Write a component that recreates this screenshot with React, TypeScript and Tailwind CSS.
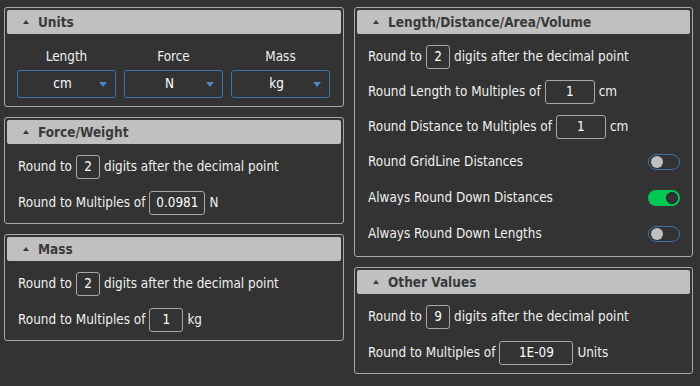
import React from 'react';

const font = { fontFamily: '"DejaVu Sans Condensed", "DejaVu Sans", Tahoma, sans-serif' };

function Panel({ title, children }: { title: string; children: React.ReactNode }) {
  return (
    <div className="rounded-[3px] border border-[#a8a8a8] p-[2px]">
      <div className="flex h-[24px] items-center rounded-[2px] bg-[#c0c0c0] pl-[16px]">
        <span className="mr-[9px] h-0 w-0 border-x-[3px] border-b-[4px] border-x-transparent border-b-[#3a3a3a]" />
        <span className="text-[13.5px] font-bold text-[#3a3a3a]">{title}</span>
      </div>
      {children}
    </div>
  );
}

function Box({ value, w }: { value: string; w: string }) {
  return (
    <span
      className={`mx-[4px] flex h-[24px] items-center justify-center rounded-[3px] border border-[#a8a8a8] text-white ${w}`}
    >
      {value}
    </span>
  );
}

function Row({ children }: { children: React.ReactNode }) {
  return <div className="flex h-[24px] items-center text-[13.4px] text-[#f0f0f0]">{children}</div>;
}

function Toggle({ on }: { on?: boolean }) {
  if (on) {
    return (
      <span className="flex h-[16px] w-[32px] items-center justify-end rounded-full bg-[#00c853] pr-[2px]">
        <span className="h-[12px] w-[12px] rounded-full border border-[#222] bg-[#333]" />
      </span>
    );
  }
  return (
    <span className="flex h-[16px] w-[32px] items-center rounded-full border border-[#3d72aa] pl-[2px]">
      <span className="h-[12px] w-[12px] rounded-full bg-[#c0c0c0]" />
    </span>
  );
}

function Select({ label, value }: { label: string; value: string }) {
  return (
    <div className="flex flex-col items-center">
      <span className="mb-[5px] text-[13.4px] leading-[16px] text-[#f0f0f0]">{label}</span>
      <div className="flex h-[28px] w-full items-center rounded-[3px] border border-[#3d72aa] pl-[8px] pr-[8px]">
        <span className="flex-1 text-center text-[13.4px] text-white">{value}</span>
        <span className="h-0 w-0 border-x-[4px] border-t-[5px] border-x-transparent border-t-[#4a88c8]" />
      </div>
    </div>
  );
}

function Rounding({ digits, mult, unit, w }: { digits: string; mult: string; unit: string; w: string }) {
  return (
    <div className="flex flex-col gap-3 pb-[6px] pl-[11px] pt-[11px]">
      <Row>
        Round to <Box value={digits} w="w-[24px]" /> digits after the decimal point
      </Row>
      <Row>
        Round to Multiples of <Box value={mult} w={w} /> {unit}
      </Row>
    </div>
  );
}

export default function App() {
  return (
    <div className="h-[386px] w-[700px] bg-[#333333] pl-[4px] pt-[7px]" style={font}>
      <div className="grid grid-cols-[340px_339px] items-start gap-x-[10px]">
        <div className="flex flex-col gap-[10px]">
          <Panel title="Units">
            <div className="grid grid-cols-3 gap-[8px] pb-[6px] pl-[10px] pr-[11px] pt-[15px]">
              <Select label="Length" value="cm" />
              <Select label="Force" value="N" />
              <Select label="Mass" value="kg" />
            </div>
          </Panel>
          <Panel title="Force/Weight">
            <Rounding digits="2" mult="0.0981" unit="N" w="w-[56px]" />
          </Panel>
          <Panel title="Mass">
            <Rounding digits="2" mult="1" unit="kg" w="w-[34px]" />
          </Panel>
        </div>
        <div className="flex flex-col gap-[10px]">
          <Panel title="Length/Distance/Area/Volume">
            <div className="flex flex-col pb-[8px] pl-[11px] pr-[10px] pt-[11px]">
              <div className="flex flex-col gap-[11px]">
                <Row>
                  Round to <Box value="2" w="w-[24px]" /> digits after the decimal point
                </Row>
                <Row>
                  Round Length to Multiples of <Box value="1" w="w-[50px]" /> cm
                </Row>
                <Row>
                  Round Distance to Multiples of <Box value="1" w="w-[50px]" /> cm
                </Row>
              </div>
              <div className="mt-[11px] flex flex-col gap-3">
                <Row>
                  <span className="flex-1">Round GridLine Distances</span>
                  <Toggle />
                </Row>
                <Row>
                  <span className="flex-1">Always Round Down Distances</span>
                  <Toggle on />
                </Row>
                <Row>
                  <span className="flex-1">Always Round Down Lengths</span>
                  <Toggle />
                </Row>
              </div>
            </div>
          </Panel>
          <Panel title="Other Values">
            <Rounding digits="9" mult="1E-09" unit="Units" w="w-[74px]" />
          </Panel>
        </div>
      </div>
    </div>
  );
}
